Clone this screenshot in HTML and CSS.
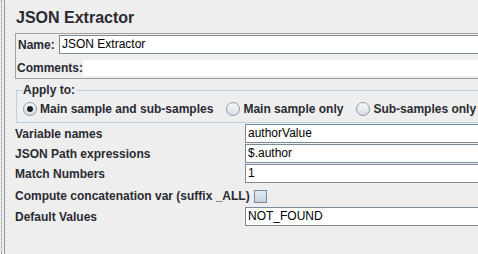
FILE: index.html
```html
<!DOCTYPE html>
<html lang="en">
<head>
    <meta charset="UTF-8">
    <title>JSON Extractor</title>
    <link rel="stylesheet" href="styles.css">
</head>
<body>
<div class="page">
    <div class="rail"></div>
    <div class="main">
        <h2 class="title">JSON Extractor</h2>

        <div class="name-box">
            <div class="name-row">
                <label>Name:</label>
                <div class="field">JSON Extractor</div>
            </div>
            <div class="comments-row">
                <label>Comments:</label>
                <div class="comment-field"></div>
            </div>
        </div>

        <fieldset class="apply">
            <legend>Apply to:</legend>
            <span class="radio checked"></span><span class="opt">Main sample and sub-samples</span>
            <span class="radio"></span><span class="opt">Main sample only</span>
            <span class="radio"></span><span class="opt">Sub-samples only</span>
        </fieldset>

        <div class="form">
            <label>Variable names</label>
            <div class="field">authorValue</div>
            <label>JSON Path expressions</label>
            <div class="field">$.author</div>
            <label>Match Numbers</label>
            <div class="field">1</div>
            <div class="check-row">
                <label>Compute concatenation var (suffix _ALL)</label>
                <span class="check"></span>
            </div>
            <label>Default Values</label>
            <div class="field">NOT_FOUND</div>
        </div>
    </div>
</div>
</body>
</html>
```

FILE: styles.css
```css
body {
    margin: 0;
    background: #eeeeee;
    font-family: "Liberation Sans", Arial, sans-serif;
    font-size: 12px;
    color: #2a2a33;
    overflow: hidden;
}
.page {
    display: flex;
    height: 254px;
    width: 540px;
}
.rail {
    margin-left: 1px;
    width: 2px;
    border-left: 1px dotted #8c8c8c;
    border-right: 1px solid #9a9a9a;
}
.main {
    flex: 1;
    padding-left: 10px;
}
.title {
    font-size: 16px;
    font-weight: bold;
    margin: 8px 0 0 1px;
    line-height: 20px;
    height: 25px;
}
label {
    font-weight: bold;
}
.name-box {
    border: 1px solid #a0a0a0;
    border-right: none;
    padding: 1px 0 1px 1px;
    height: 42px;
}
.name-row {
    display: flex;
    align-items: center;
    height: 19px;
}
.name-row label {
    width: 41px;
    padding-left: 1px;
}
.field {
    flex: 1;
    height: 17px;
    line-height: 17px;
    background: #fff;
    border: 1px solid #7a8a99;
    padding-left: 2px;
    color: #000;
    font-weight: normal;
}
.comments-row {
    display: flex;
    align-items: center;
    margin-top: 6px;
    height: 16px;
}
.comments-row label {
    width: 66px;
}
.comment-field {
    flex: 1;
    height: 16px;
    background: #fff;
}
.apply {
    margin: 4px 0 0 1px;
    border: 1px solid #b8cfe5;
    border-right: none;
    padding: 2px 0 4px 6px;
    height: 32px;
    display: flex;
    align-items: center;
}
.apply legend {
    font-weight: bold;
    padding: 0 2px 0 0;
    margin-left: 0;
}
.radio {
    width: 12px;
    height: 12px;
    border: 1px solid #8f9aa6;
    border-radius: 50%;
    background: linear-gradient(#f8f8f8, #d6dde6);
    display: inline-flex;
    align-items: center;
    justify-content: center;
    margin-right: 3px;
}
.radio.checked::after {
    content: "";
    width: 6px;
    height: 6px;
    border-radius: 50%;
    background: #222;
}
.opt {
    font-weight: bold;
    margin-right: 13px;
}
.form {
    display: grid;
    grid-template-columns: 230px 1fr;
    row-gap: 1px;
    align-items: center;
    margin-top: 1px;
}
.form label {
    padding-top: 1px;
}
.check-row {
    grid-column: 1 / 3;
    display: flex;
    align-items: center;
    height: 22px;
}
.check {
    width: 11px;
    height: 11px;
    margin-left: 4px;
    margin-top: 2px;
    border: 1px solid #7a8a99;
    background: linear-gradient(#e4ecf4, #c4d2e0);
}
```
